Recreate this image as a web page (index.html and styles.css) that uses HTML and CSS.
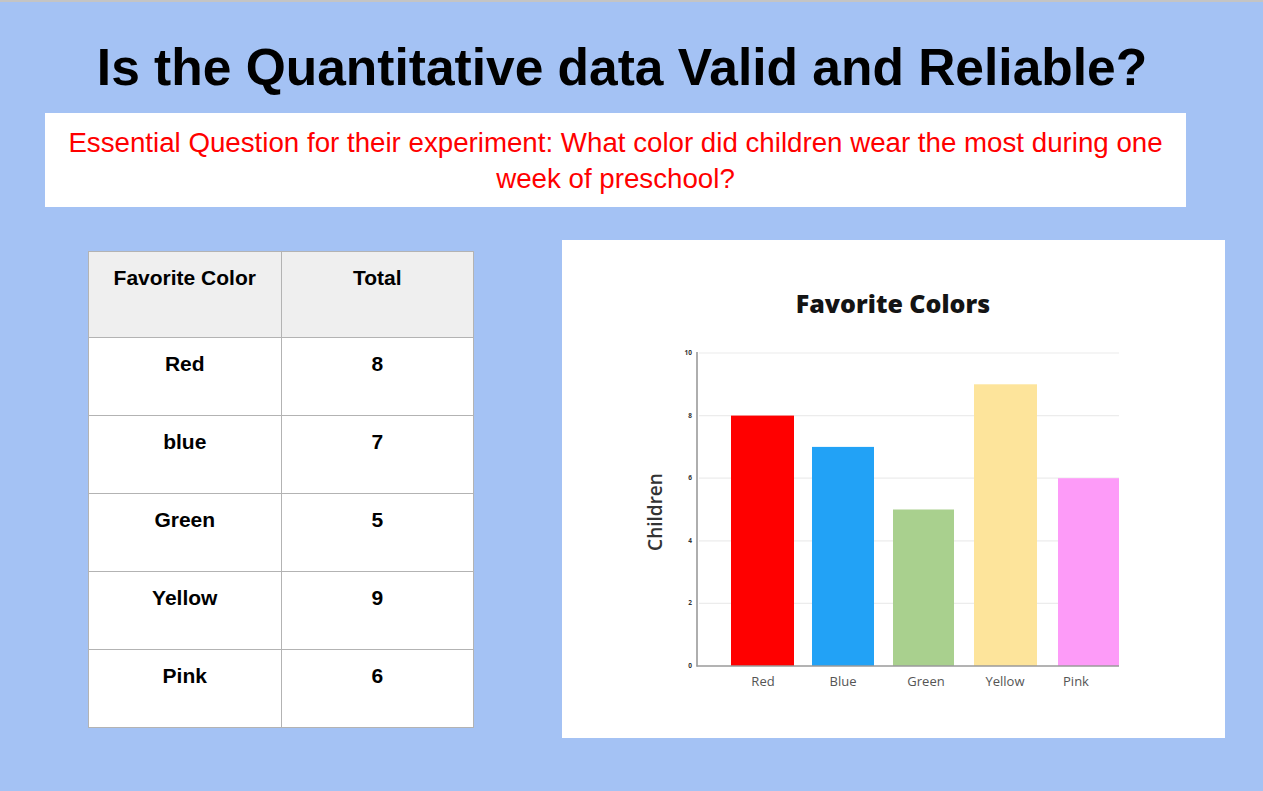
FILE: index.html
```html
<!DOCTYPE html>
<html lang="en">
<head>
<meta charset="utf-8">
<title>Is the Quantitative data Valid and Reliable?</title>
<link rel="stylesheet" href="styles.css">
</head>
<body>
<div class="slide">
  <h1 class="title">Is the Quantitative data Valid and Reliable?</h1>
  <div class="question">Essential Question for their experiment: What color did children wear the most during one<br>week of preschool?</div>
  <div class="content">
    <table class="data">
      <thead>
        <tr class="head-row"><th>Favorite Color</th><th>Total</th></tr>
      </thead>
      <tbody>
        <tr><td>Red</td><td>8</td></tr>
        <tr><td>blue</td><td>7</td></tr>
        <tr><td>Green</td><td>5</td></tr>
        <tr><td>Yellow</td><td>9</td></tr>
        <tr><td>Pink</td><td>6</td></tr>
      </tbody>
    </table>
    <div class="chart">
      <svg class="chart-svg" width="663" height="498" viewBox="0 0 663 498">
        <text class="chart-title" x="331" y="73" text-anchor="middle">Favorite Colors</text>
        <g class="grid">
          <line x1="137" y1="113" x2="557" y2="113"/>
          <line x1="137" y1="175.6" x2="557" y2="175.6"/>
          <line x1="137" y1="238.2" x2="557" y2="238.2"/>
          <line x1="137" y1="300.8" x2="557" y2="300.8"/>
          <line x1="137" y1="363.4" x2="557" y2="363.4"/>
        </g>
        <g class="ticks">
          <text x="130" y="115">10</text>
          <text x="130" y="178">8</text>
          <text x="130" y="240">6</text>
          <text x="130" y="303">4</text>
          <text x="130" y="365">2</text>
          <text x="130" y="428">0</text>
        </g>
        <rect x="169" y="175.6" width="63" height="250.4" fill="#ff0000"/>
        <rect x="250" y="206.9" width="62" height="219.1" fill="#22a2f6"/>
        <rect x="331" y="269.5" width="61" height="156.5" fill="#a9d08e"/>
        <rect x="412" y="144.3" width="63" height="281.7" fill="#fde49b"/>
        <rect x="496" y="238.2" width="61" height="187.8" fill="#fd9bf8"/>
        <line class="axis" x1="135" y1="112" x2="135" y2="426.5"/>
        <line class="axis" x1="134.5" y1="426" x2="557" y2="426"/>
        <g class="xlabels">
          <text x="201" y="446">Red</text>
          <text x="281" y="446">Blue</text>
          <text x="364" y="446">Green</text>
          <text x="443" y="446">Yellow</text>
          <text x="514" y="446">Pink</text>
        </g>
        <text class="ytitle" x="0" y="0" transform="translate(100 272) rotate(-90)" text-anchor="middle">Children</text>
      </svg>
    </div>
  </div>
</div>
</body>
</html>
```

FILE: styles.css
```css
html, body {
  margin: 0;
  padding: 0;
}

body {
  background: #a4c2f4;
  border-top: 2px solid #c4c4c4;
  font-family: "Liberation Sans", Arial, sans-serif;
  height: 789px;
  overflow: hidden;
}

.slide {
  display: flex;
  flex-direction: column;
}

.title {
  margin: 35px 0 0 0;
  padding-right: 19px;
  font-size: 51.5px;
  line-height: 60px;
  font-weight: bold;
  color: #000;
  text-align: center;
}

.question {
  margin: 16px 77px 0 45px;
  height: 94px;
  box-sizing: border-box;
  padding-top: 12px;
  background: #fff;
  color: #ff0000;
  font-size: 27.7px;
  line-height: 36px;
  text-align: center;
  white-space: nowrap;
}

.content {
  display: flex;
  align-items: flex-start;
  margin-top: 33px;
  padding-left: 88px;
  gap: 88px;
}

.data {
  margin-top: 11px;
  width: 386px;
  border-collapse: collapse;
  table-layout: fixed;
  background: #fff;
}

.data th,
.data td {
  border: 1px solid #b3b3b3;
  text-align: center;
  vertical-align: top;
  padding: 14px 0 0 0;
  font-size: 21px;
  line-height: 24px;
  font-weight: bold;
  color: #000;
  box-sizing: border-box;
}

.data th {
  background: #efefef;
}

.head-row {
  height: 86px;
}

.data tbody tr {
  height: 78px;
}

.chart {
  width: 663px;
  height: 498px;
  background: #fff;
}

.chart-svg {
  display: block;
}

.chart-title {
  font-family: "Open Sans", sans-serif;
  font-weight: 800;
  font-size: 25px;
  fill: #141414;
}

.grid line {
  stroke: #ececec;
  stroke-width: 1.2;
}

.axis {
  stroke: #9a9a9a;
  stroke-width: 1.6;
}

.ticks text {
  font-family: "Open Sans", sans-serif;
  font-weight: bold;
  font-size: 6.5px;
  fill: #333;
  text-anchor: end;
}

.xlabels text {
  font-family: "Open Sans", sans-serif;
  font-size: 13px;
  fill: #555;
  text-anchor: middle;
}

.ytitle {
  font-family: "Open Sans", sans-serif;
  font-weight: 600;
  font-size: 19px;
  fill: #333;
}
```
